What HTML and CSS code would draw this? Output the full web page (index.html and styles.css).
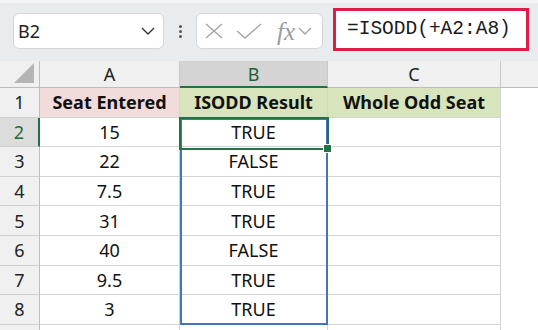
FILE: index.html
```html
<!DOCTYPE html>
<html lang="en">
<head>
    <meta charset="UTF-8">
    <meta name="viewport" content="width=device-width, initial-scale=1.0">
    <title>ISODD Sheet</title>
    <link rel="stylesheet" href="styles.css">
</head>
<body>
    <div class="toolbar">
        <div class="name-box">
            <span>B2</span>
            <svg class="chev" width="14" height="8" viewBox="0 0 14 8"><path d="M1 1 L7 7 L13 1" fill="none" stroke="#333" stroke-width="1.4"/></svg>
        </div>
        <div class="dots"><i></i><i></i><i></i></div>
        <div class="fx-box">
            <svg width="20" height="16" viewBox="0 0 20 16"><path d="M2 1 L18 15 M18 1 L2 15" fill="none" stroke="#a3a3a3" stroke-width="1.4"/></svg>
            <svg width="26" height="16" viewBox="0 0 26 16"><path d="M1 8 L9 15 L25 1" fill="none" stroke="#a3a3a3" stroke-width="1.4"/></svg>
            <span class="fx">fx</span>
            <svg width="14" height="8" viewBox="0 0 14 8"><path d="M1 1 L7 7 L13 1" fill="none" stroke="#a3a3a3" stroke-width="1.4"/></svg>
        </div>
        <div class="formula">=ISODD(+A2:A8)</div>
    </div>

    <div class="sheet">
        <div class="hd corner">
            <svg width="22" height="22" viewBox="0 0 22 22"><path d="M21 1 L21 21 L1 21 Z" fill="#b5b5b5"/></svg>
        </div>
        <div class="hd col">A</div>
        <div class="hd col active">B</div>
        <div class="hd col">C</div>
        <div class="hd col last"></div>

        <div class="hd row">1</div>
        <div class="cell title pink">Seat Entered</div>
        <div class="cell title green">ISODD Result</div>
        <div class="cell title green">Whole Odd Seat</div>
        <div class="blank"></div>

        <div class="hd row active">2</div>
        <div class="cell">15</div>
        <div class="cell">TRUE</div>
        <div class="cell"></div>
        <div class="blank"></div>

        <div class="hd row">3</div>
        <div class="cell">22</div>
        <div class="cell">FALSE</div>
        <div class="cell"></div>
        <div class="blank"></div>

        <div class="hd row">4</div>
        <div class="cell">7.5</div>
        <div class="cell">TRUE</div>
        <div class="cell"></div>
        <div class="blank"></div>

        <div class="hd row">5</div>
        <div class="cell">31</div>
        <div class="cell">TRUE</div>
        <div class="cell"></div>
        <div class="blank"></div>

        <div class="hd row">6</div>
        <div class="cell">40</div>
        <div class="cell">FALSE</div>
        <div class="cell"></div>
        <div class="blank"></div>

        <div class="hd row">7</div>
        <div class="cell">9.5</div>
        <div class="cell">TRUE</div>
        <div class="cell"></div>
        <div class="blank"></div>

        <div class="hd row">8</div>
        <div class="cell">3</div>
        <div class="cell">TRUE</div>
        <div class="cell"></div>
        <div class="blank"></div>

        <div class="hd row"></div>
        <div class="cell"></div>
        <div class="cell"></div>
        <div class="cell"></div>
        <div class="blank"></div>

        <div class="range"></div>
        <div class="selected"><span class="handle"></span></div>
    </div>
</body>
</html>
```

FILE: styles.css
```css
body {
    margin: 0;
    font-family: "Noto Sans", Arial, sans-serif;
    background: #ffffff;
    color: #111;
    height: 330px;
    overflow: hidden;
}
.toolbar {
    height: 61px;
    box-sizing: border-box;
    background: #e9ecef;
    border-top: 3px solid #f2f4f6;
    display: flex;
    align-items: flex-start;
    padding-left: 13px;
}
.name-box {
    margin-top: 10px;
    width: 151px;
    height: 36px;
    box-sizing: border-box;
    background: #fff;
    border: 1px solid #d3d7db;
    border-radius: 6px;
    display: flex;
    align-items: center;
    justify-content: space-between;
    padding: 0 8px 0 4px;
    font-size: 18px;
    color: #222;
}
.dots {
    width: 32px;
    height: 36px;
    margin-top: 10px;
    display: flex;
    flex-direction: column;
    align-items: center;
    justify-content: center;
    gap: 2px;
}
.dots i {
    width: 3px;
    height: 3px;
    background: #555;
    border-radius: 50%;
}
.fx-box {
    margin-top: 10px;
    width: 127px;
    height: 36px;
    box-sizing: border-box;
    background: #fff;
    border: 1px solid #d3d7db;
    border-radius: 6px;
    display: flex;
    align-items: center;
    padding-left: 7px;
    gap: 12px;
}
.fx-box .fx {
    font-family: "Liberation Serif", serif;
    font-style: italic;
    font-size: 25px;
    color: #9c9c9c;
    margin-left: 3px;
    margin-right: -9px;
    line-height: 1;
}
.formula {
    margin-top: 5px;
    margin-left: 10px;
    width: 196px;
    height: 43px;
    box-sizing: border-box;
    border: 3px solid #e21a48;
    background: #fff;
    font-family: "Liberation Mono", monospace;
    font-size: 19.5px;
    color: #1a1a1a;
    padding-left: 11px;
    line-height: 36px;
}
.sheet {
    position: relative;
    height: 269px;
    overflow: hidden;
    display: grid;
    grid-template-columns: 40px 140px 148px 173px 1fr;
    grid-template-rows: 27px repeat(9, 29.6px);
    font-size: 18px;
}
.hd {
    background: #f0f0f0;
    box-sizing: border-box;
    display: flex;
    align-items: center;
    justify-content: center;
    color: #222;
}
.col {
    border-right: 1px solid #c9c9c9;
    border-bottom: 1px solid #bdbdbd;
}
.col.last {
    border-right: none;
}
.corner {
    border-right: 1px solid #bdbdbd;
    border-bottom: 1px solid #bdbdbd;
    justify-content: flex-end;
    align-items: flex-end;
    padding: 0 4px 3px 0;
}
.row {
    border-right: 1px solid #bdbdbd;
    border-bottom: 1px solid #d0d0d0;
}
.col.active {
    background: #d4d4d4;
    border-bottom: 2px solid #217346;
    color: #1e5e38;
}
.row.active {
    background: #dcdcdc;
    border-right: 2px solid #217346;
    color: #1e6b3e;
}
.cell {
    box-sizing: border-box;
    border-right: 1px solid #d4d4d4;
    border-bottom: 1px solid #d4d4d4;
    display: flex;
    align-items: center;
    justify-content: center;
}
.title {
    font-weight: bold;
}
.pink {
    background: #f2dcdb;
}
.green {
    background: #d8e4bc;
}
.range {
    position: absolute;
    left: 180px;
    top: 57px;
    width: 148px;
    height: 207px;
    box-sizing: border-box;
    border: 2px solid #4472c4;
}
.selected {
    position: absolute;
    left: 179px;
    top: 56px;
    width: 150px;
    height: 33px;
    box-sizing: border-box;
    border: 2px solid #217346;
}
.handle {
    position: absolute;
    right: -5px;
    bottom: -5px;
    width: 7px;
    height: 7px;
    background: #217346;
    border: 1px solid #fff;
}
```
